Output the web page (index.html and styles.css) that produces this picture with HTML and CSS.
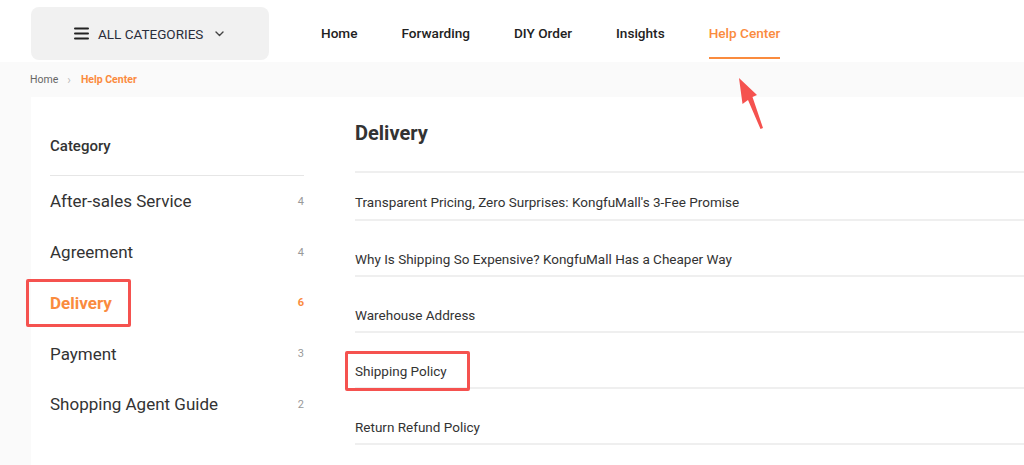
FILE: index.html
```html
<!DOCTYPE html>
<html lang="en">
<head>
<meta charset="utf-8">
<title>Help Center - Delivery</title>
<link rel="stylesheet" href="styles.css">
</head>
<body>
<header class="header">
  <div class="cat-btn">
    <svg class="burger" width="15" height="13" viewBox="0 0 15 13"><rect x="0" y="0.5" width="15" height="2" rx="1"/><rect x="0" y="5.5" width="15" height="2" rx="1"/><rect x="0" y="10.5" width="15" height="2" rx="1"/></svg>
    <span class="cat-label">ALL CATEGORIES</span>
    <svg class="chev" width="9" height="6" viewBox="0 0 9 6"><path d="M1 1l3.5 3.5L8 1" fill="none" stroke="#444" stroke-width="1.4" stroke-linecap="round" stroke-linejoin="round"/></svg>
  </div>
  <nav class="nav">
    <a class="nav-item">Home</a>
    <a class="nav-item">Forwarding</a>
    <a class="nav-item">DIY Order</a>
    <a class="nav-item">Insights</a>
    <a class="nav-item active">Help Center</a>
  </nav>
</header>
<div class="crumbs">
  <span class="crumb">Home</span>
  <span class="sep">›</span>
  <span class="crumb current">Help Center</span>
</div>
<main class="main">
  <aside class="side">
    <div class="side-title">Category</div>
    <ul class="cats">
      <li class="cat"><span>After-sales Service</span><span class="count">4</span></li>
      <li class="cat"><span>Agreement</span><span class="count">4</span></li>
      <li class="cat active"><span class="mark mark-cat">Delivery</span><span class="count">6</span></li>
      <li class="cat"><span>Payment</span><span class="count">3</span></li>
      <li class="cat"><span>Shopping Agent Guide</span><span class="count">2</span></li>
    </ul>
  </aside>
  <section class="content">
    <h1 class="title">Delivery</h1>
    <ul class="articles">
      <li class="article">Transparent Pricing, Zero Surprises: KongfuMall's 3-Fee Promise</li>
      <li class="article">Why Is Shipping So Expensive? KongfuMall Has a Cheaper Way</li>
      <li class="article">Warehouse Address</li>
      <li class="article"><span class="mark mark-art">Shipping Policy</span></li>
      <li class="article">Return Refund Policy</li>
    </ul>
  </section>
</main>
<svg class="arrow" width="40" height="60" viewBox="0 0 40 60"><polygon points="4,3 22,20 17.5,22 28,53 25.5,54 13,25 7.5,29" fill="#f5524f"/></svg>
</body>
</html>
```

FILE: styles.css
```css
* { box-sizing: border-box; }
html, body { margin: 0; padding: 0; }
body {
  font-family: Roboto, "Noto Sans", Arial, sans-serif;
  background: #fafafa;
  color: #333;
  width: 1024px;
  height: 465px;
  overflow: hidden;
  position: relative;
}
ul { list-style: none; margin: 0; padding: 0; }
a { text-decoration: none; color: inherit; }

.header {
  background: #fff;
  height: 62px;
  display: flex;
  align-items: flex-start;
  padding: 7px 0 0 31px;
}
.cat-btn {
  width: 238px;
  height: 53px;
  background: #f1f1f1;
  border-radius: 8px;
  display: flex;
  align-items: center;
  padding-left: 43px;
}
.burger { fill: #222; }
.cat-label {
  font-size: 13.5px;
  color: #2a2e3b;
  margin: 0 12px 0 9px;
}
.chev { margin-top: 1px; }

.nav {
  display: flex;
  gap: 44px;
  margin-left: 52px;
  height: 52px;
}
.nav-item {
  font-size: 13.6px;
  font-weight: 500;
  color: #222;
  display: flex;
  align-items: center;
  height: 100%;
  padding-top: 2px;
  border-bottom: 2px solid transparent;
}
.nav-item.active {
  color: #fa8b3e;
  border-bottom-color: #fa8b3e;
}

.crumbs {
  height: 35px;
  display: flex;
  align-items: center;
  gap: 7px;
  padding-left: 30px;
  font-size: 10.5px;
  color: #666;
}
.sep { color: #bbb; font-size: 12px; margin: 0 3px 0 2px; }
.crumb.current { color: #fa8b3e; font-weight: 700; }

.main {
  margin-left: 31px;
  background: #fff;
  display: flex;
  height: 368px;
}
.side {
  width: 299px;
  padding: 39px 0 0 19px;
}
.side-title {
  width: 254px;
  font-size: 15px;
  font-weight: 500;
  color: #333;
  line-height: 20px;
  padding-bottom: 19px;
  border-bottom: 1px solid #e6e6e6;
}
.cats { width: 254px; }
.cat {
  height: 50.75px;
  display: flex;
  align-items: center;
  justify-content: space-between;
  font-size: 17px;
  color: #333;
}
.count { font-size: 11px; color: #999; }
.cat.active { color: #fa8b3e; font-weight: 700; }
.cat.active .count { color: #fa8b3e; }

.mark { position: relative; }
.mark::after {
  content: "";
  position: absolute;
  border: 3px solid #f5524f;
  border-radius: 2px;
}
.mark-cat::after { left: -24px; right: -19px; top: -14px; bottom: -14px; }
.mark-art::after { left: -10px; right: -23px; top: -12px; bottom: -12px; }

.content {
  flex: 1;
  padding: 24px 0 0 25px;
}
.title {
  margin: 0;
  font-size: 20px;
  font-weight: 700;
  line-height: 24px;
  color: #333;
  padding-bottom: 26px;
  border-bottom: 2px solid #efefef;
}
.article {
  font-size: 13.5px;
  color: #333;
  line-height: 16px;
  padding: 30px 0 8px;
  border-bottom: 2px solid #efefef;
  height: 56px;
}
.article:first-child { padding-top: 21px; height: 48px; }

.arrow {
  position: absolute;
  left: 735px;
  top: 75px;
}
```
